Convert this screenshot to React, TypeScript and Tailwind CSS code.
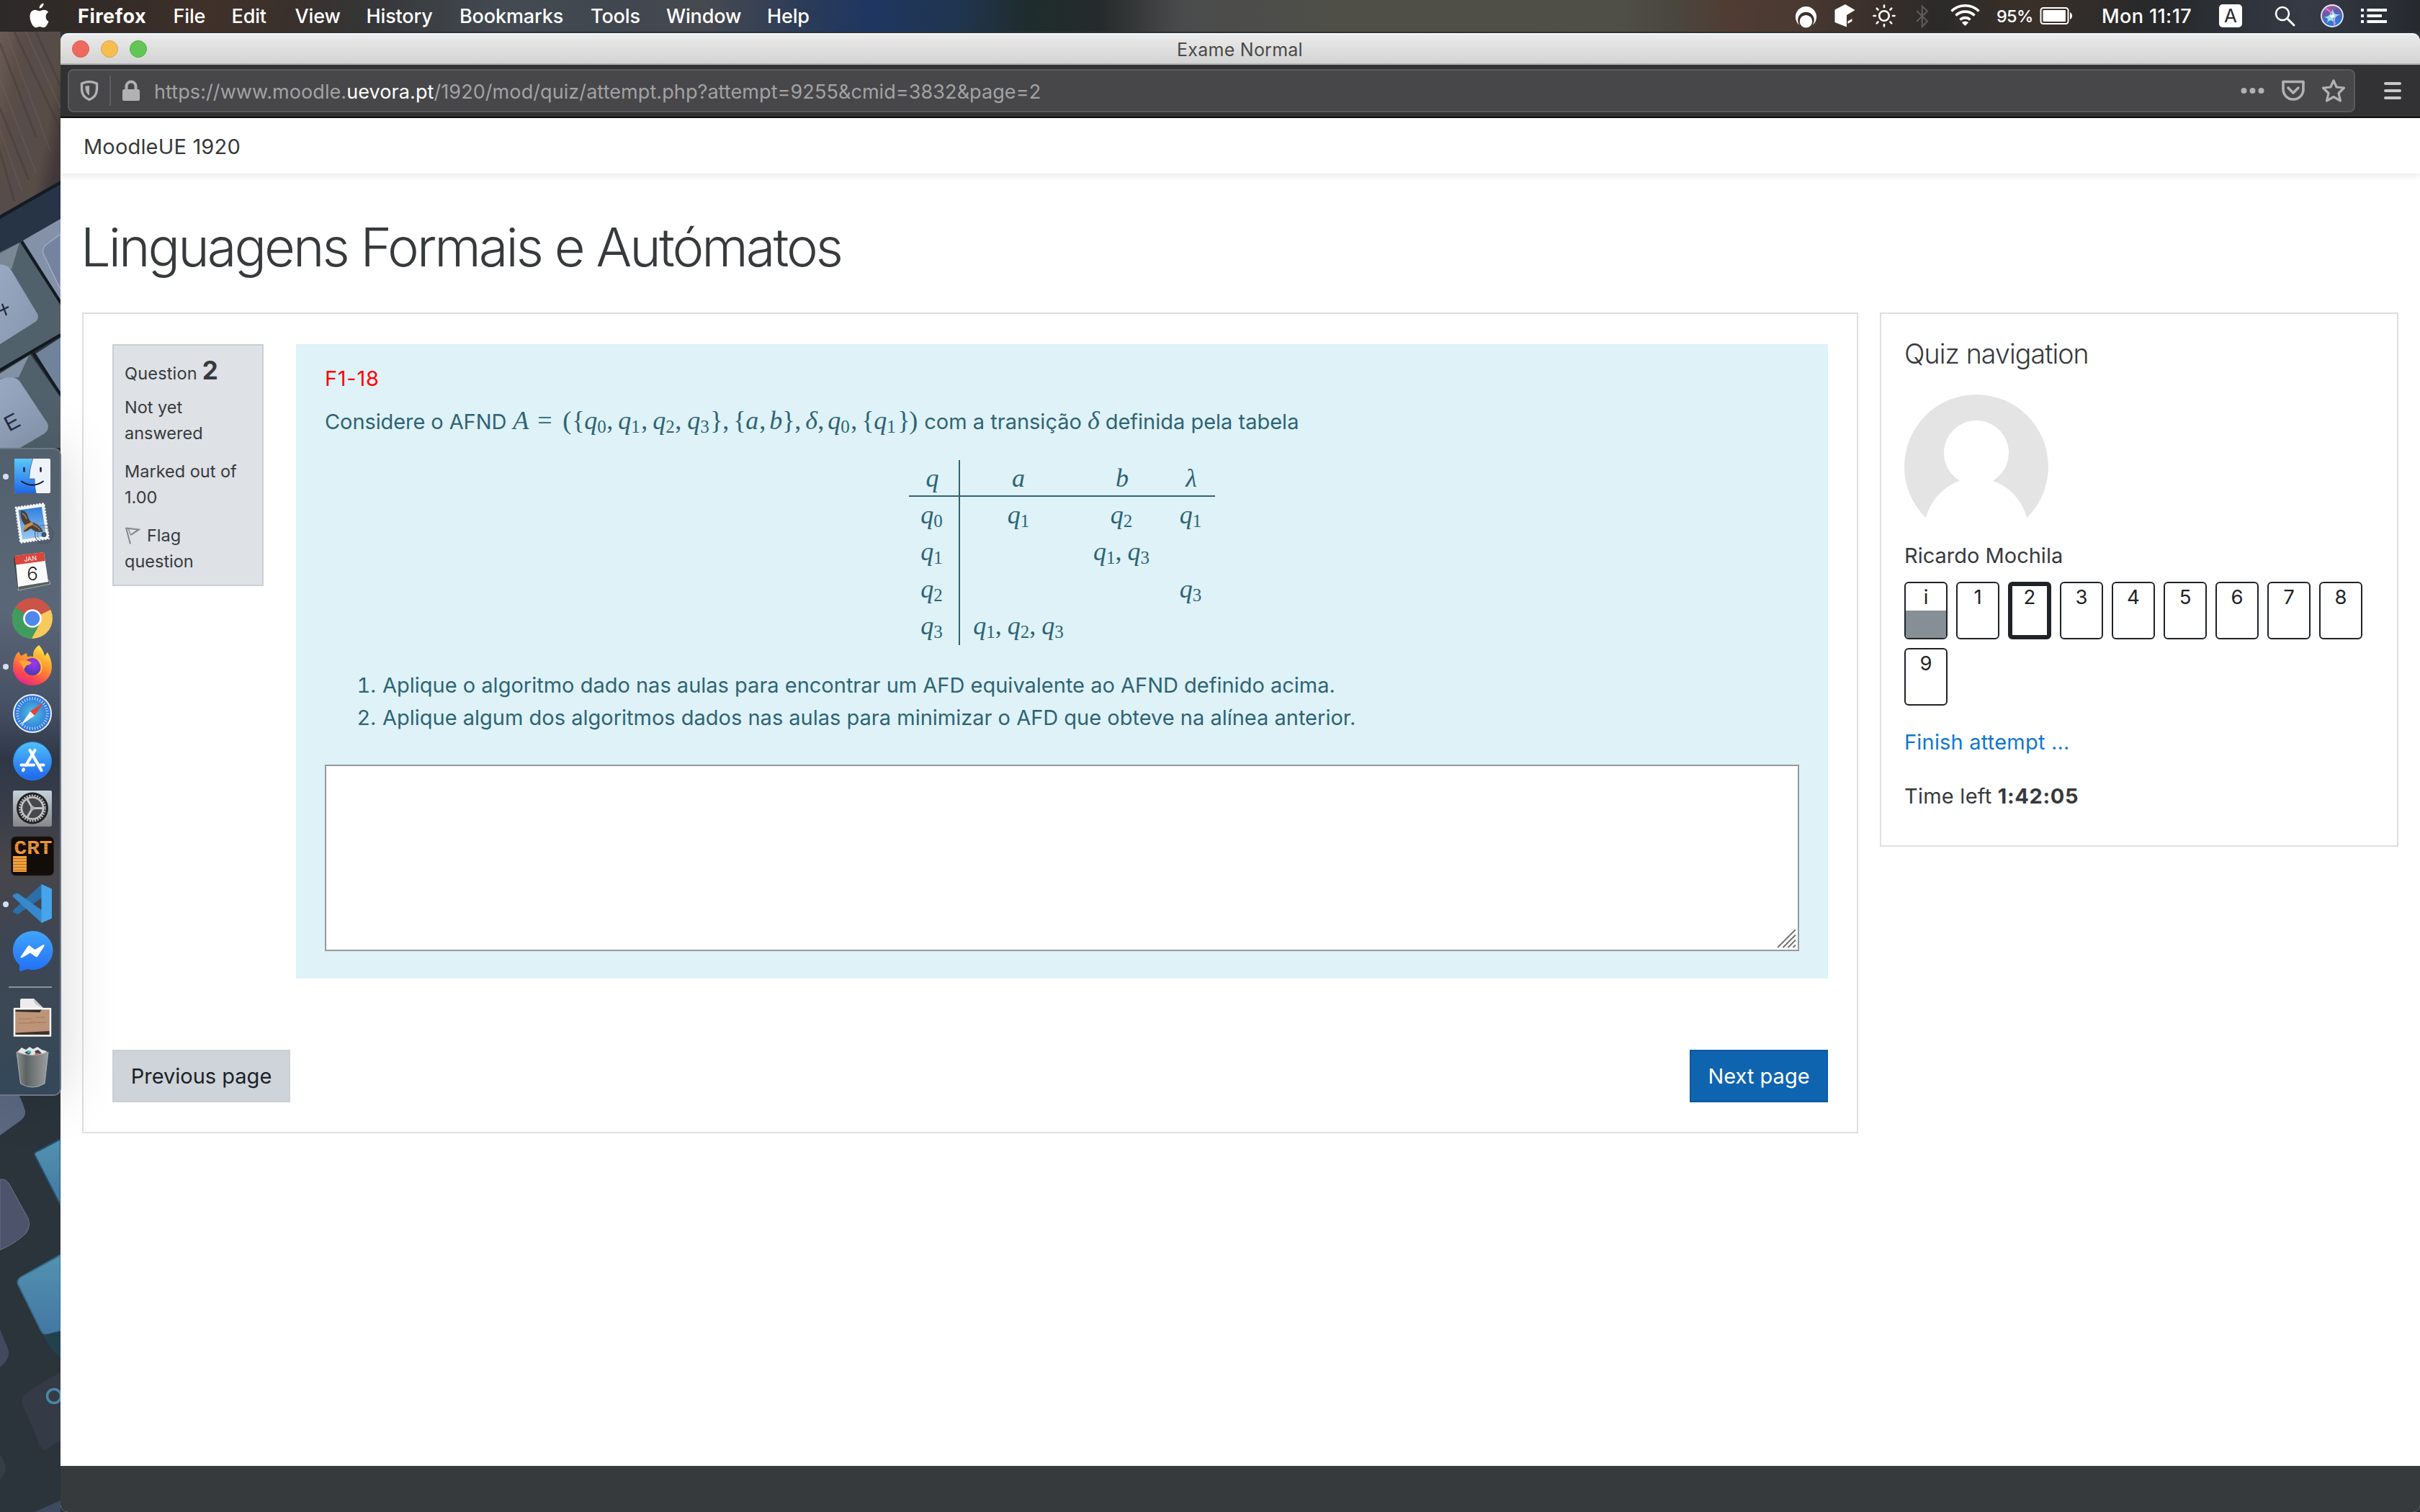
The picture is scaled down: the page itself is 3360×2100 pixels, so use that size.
import type { ReactNode } from "react";

type SliceProps = { x: number; w: number; y?: number; h?: number; children?: ReactNode };

/* A slice of the desktop: the drawing inside uses screen coordinates. */
function Slice({ x, w, y = 0, h = 44, children }: SliceProps) {
  return (
    <svg className="block shrink-0" width={w} height={h} viewBox={`${x} ${y} ${w} ${h}`}>
      {children}
    </svg>
  );
}

function Apple() {
  return (
    <svg className="block h-[36px] w-[27px]" viewBox="0 0 27 36" fill="#fff">
      <path d="M19.5 0.5c.3 3.2-2.4 7-5.9 7.1C13.200 4.400 16.300 1 19.500.5z" />
      <path d="M22.600 19c0-3 1.700-4.900 3.500-6-1.400-2-3.600-3.200-6.100-3.200-2.700 0-4.300 1.500-6.200 1.500-2 0-3.700-1.500-6.200-1.500C3.500 9.800.5 13.400.5 19c0 7.400 4.700 15.300 8.400 15.300 2 0 2.900-1.300 5.200-1.300s3 1.300 5.200 1.300c3.400 0 6.300-5.600 7.200-8.600-2.400-1-3.900-3.500-3.900-6.700z" />
    </svg>
  );
}

function MenuBar() {
  const items = [
    ["File", "w-[81px]"],
    ["Edit", "w-[88px]"],
    ["View", "w-[99px]"],
    ["History", "w-[129.5px]"],
    ["Bookmarks", "w-[182px]"],
    ["Tools", "w-[105px]"],
    ["Window", "w-[140px]"],
    ["Help", "w-[80px]"],
  ];
  return (
    <header className="flex h-[44px] items-center justify-between bg-[linear-gradient(90deg,#2d2928_0px,#332b27_150px,#40312a_290px,#3a302b_400px,#353536_500px,#434a52_700px,#41474f_850px,#464950_980px,#2c3c58_1110px,#1e3661_1210px,#20354f_1330px,#1f2c2d_1430px,#262b2c_1530px,#4a4b4c_1640px,#4f4f48_1850px,#4f4e47_2250px,#49473f_2320px,#503c33_2400px,#4a3a32_2490px,#3a2f2a_2600px,#2b2a28_2690px,#3a302a_2820px,#26282a_3000px,#353a45_3200px,#262a2f_3360px)] text-[27px] leading-[45px] font-medium text-white">
      <nav className="flex items-center whitespace-nowrap">
        <div className="w-[108px] pl-[41px]">
          <Apple />
        </div>
        <span className="w-[132.5px] font-bold tracking-[0.02em]">Firefox</span>
        {items.map(([label, width]) => (
          <span key={label} className={`${width} tracking-[-0.005em]`}>
            {label}
          </span>
        ))}
      </nav>
      <div className="flex w-[870px] shrink-0 items-center whitespace-nowrap">
        <Slice x={2490} w={56}>
          <circle cx="2507.500" cy="23.500" r="14.600" fill="#fff" />
          <circle cx="2507.500" cy="28" r="11.300" fill="#3c302b" />
          <circle cx="2507.500" cy="29.800" r="8.800" fill="#fff" />
        </Slice>
        <Slice x={2546} w={52}>
          <path d="M2562 6L2575.500 14 2564 21V37.600L2547.500 31V13.500z" fill="#fff" />
          <path d="M2565.500 29.500L2571.500 26V29.500L2565.500 33z" fill="#fff" />
        </Slice>
        <Slice x={2598} w={60}>
          <g stroke="#fff" strokeWidth="2.600" fill="none" strokeLinecap="round">
            <circle cx="2616" cy="22" r="6.800" />
            <path d="M2616 7.500V10M2616 34V36.500M2601.500 22H2604M2628 22H2630.500M2605.700 11.700L2607.500 13.500M2624.500 30.500L2626.300 32.300M2605.700 32.300L2607.500 30.500M2624.500 13.500L2626.300 11.700" />
          </g>
        </Slice>
        <Slice x={2658} w={48}>
          <path d="M2661 15L2676 29.500 2668.800 37V8.500L2676 15.500 2661 30" fill="none" stroke="#5c5a58" strokeWidth="2.200" />
        </Slice>
        <Slice x={2706} w={65}>
          <g stroke="#fff" strokeWidth="3.600" fill="none">
            <path d="M2709.500 15.500a27 27 0 0 1 38 0" />
            <path d="M2715.500 21.500a18.500 18.500 0 0 1 26 0" />
            <path d="M2721.500 27.500a10 10 0 0 1 14 0" />
          </g>
          <path d="M2728.500 36L2723.800 31.300a6.800 6.800 0 0 1 9.400 0z" fill="#fff" />
        </Slice>
        <span className="w-[60px] pl-[1px] text-[23.5px] tracking-[-0.03em]">95%</span>
        <Slice x={2831} w={87}>
          <rect x="2833.500" y="11" width="38" height="22" rx="3.500" fill="none" stroke="#fff" strokeWidth="2" />
          <rect x="2836.500" y="14" width="31.500" height="16" rx="1" fill="#fff" />
          <path d="M2874.500 17.500a6 6 0 0 1 0 9z" fill="#fff" stroke="#fff" />
        </Slice>
        <span className="w-[163px] tracking-[0.014em]">Mon 11:17</span>
        <div className="flex h-[32px] w-[32px] items-center justify-center rounded-[5px] bg-white text-[26px] leading-[32px] font-normal text-[#26282c]">A</div>
        <Slice x={3113} w={107}>
          <circle cx="3169" cy="19" r="9" fill="none" stroke="#fff" strokeWidth="2.600" />
          <path d="M3175.500 25.500L3185 35" stroke="#fff" strokeWidth="3" strokeLinecap="round" />
        </Slice>
        <Slice x={3220} w={56}>
          <defs>
            <linearGradient id="siri" x1="0" y1="0" x2="0.300" y2="1">
              <stop offset="0" stopColor="#d65aa8" />
              <stop offset="0.400" stopColor="#6a5aa8" />
              <stop offset="1" stopColor="#2a7be0" />
            </linearGradient>
          </defs>
          <circle cx="3238" cy="22" r="15" fill="url(#siri)" stroke="#e8e8f0" strokeWidth="1.800" />
          <path d="M3226 24C3233 23 3236 21 3239 12C3239.500 19 3242 20.500 3250 20C3242.500 22 3240.500 25 3243 34C3238 27 3235 27 3230 32C3234 26.500 3232 24.500 3226 24z" fill="#8ee4f0" />
          <path d="M3238 19l3 2 0 3-4 1-2-3z" fill="#fff" />
          <path d="M3229 12q6 2 9 9M3240 24q1 6 1 11" fill="none" stroke="#f37bc3" strokeWidth="2" />
        </Slice>
        <Slice x={3276} w={84}>
          <path d="M3278 12h4v4h-4zM3286.500 12h27.500v4h-27.500zM3278 20h4v4h-4zM3286.500 20h20.500v4h-20.500zM3278 28h4v4h-4zM3286.500 28h27.500v4h-27.500z" fill="#fff" />
        </Slice>
      </div>
    </header>
  );
}

/* Desktop picture: a typewriter keyboard on a wooden table. */
function Wallpaper() {
  return (
    <svg className="absolute inset-0 h-full w-full" viewBox="0 44 84 2056" preserveAspectRatio="none">
      <defs>
        <linearGradient id="wood" x1="0" y1="0" x2="1" y2="0.600">
          <stop offset="0" stopColor="#6a5b55" />
          <stop offset="0.300" stopColor="#5a4d47" />
          <stop offset="0.500" stopColor="#564c4b" />
          <stop offset="0.800" stopColor="#584c46" />
          <stop offset="1" stopColor="#41383a" />
        </linearGradient>
        <linearGradient id="keyFace" x1="0" y1="0" x2="1" y2="1">
          <stop offset="0" stopColor="#99a8c2" />
          <stop offset="1" stopColor="#8696ad" />
        </linearGradient>
        <linearGradient id="blueKey" x1="0" y1="0" x2="0" y2="1">
          <stop offset="0" stopColor="#5292b0" />
          <stop offset="1" stopColor="#4377a4" />
        </linearGradient>
      </defs>
      <rect x="0" y="44" width="84" height="2056" fill="#2b333b" />
      <path d="M0 44H84V251L0 299z" fill="url(#wood)" />
      <g stroke="#40342f" strokeWidth="3" opacity="0.350" fill="none">
        <path d="M0 60L50 190M20 44L84 180M50 44L84 120M0 150L40 250M0 210L20 280" />
      </g>
      <g stroke="#7a6a66" strokeWidth="2" opacity="0.300" fill="none">
        <path d="M8 44L70 210M36 44L84 150M0 110L50 240M0 180L30 265" />
      </g>
      <path d="M0 299L84 251V304L31 335L0 350z" fill="#263445" />
      <path d="M0 299L84 251V256L0 304z" fill="#151b22" />
      <path d="M0 350L29 336L84 424V464L0 514z" fill="#51616c" />
      <path d="M0 352L27 337L16 374L0 367z" fill="#7a8896" />
      <path d="M0 367Q12 368 16 376L52 436Q55 443 49 447L0 478z" fill="url(#keyFace)" />
      <path d="M0 432L12 426M3 422L9 438" stroke="#20283c" strokeWidth="2.200" />
      <path d="M32 334L84 304V417z" fill="#8392a8" />
      <path d="M64 340L84 325V402L60 352Q58 345 64 340z" fill="#7484a0" stroke="#9eabc0" strokeWidth="1.500" />
      <path d="M30 336L84 420" stroke="#131a22" strokeWidth="4" />
      <path d="M0 514L84 465" stroke="#12181f" strokeWidth="4" />
      <path d="M0 518L42 492L84 552V622H0z" fill="#50616b" />
      <path d="M0 519L40 494L26 524L0 526z" fill="#8292a4" />
      <path d="M0 527Q22 519 29 532L66 588Q69 596 62 602L28 622H0z" fill="url(#keyFace)" />
      <text x="7" y="598" fontSize="30" fill="#232b44" fontFamily="Liberation Sans" transform="rotate(-28 14 588)">
        E
      </text>
      <path d="M50 491L84 469V546z" fill="#71839a" />
      <path d="M46 490L84 548" stroke="#141b22" strokeWidth="4" />
      <path d="M0 1510H20Q30 1525 35 1543Q36 1550 29 1556L0 1577z" fill="#5b6880" />
      <path d="M0 1638Q9 1637 13 1645L39 1692Q43 1703 36 1713Q20 1728 0 1736z" fill="#4c536b" stroke="#6d7486" strokeWidth="1" />
      <path d="M48 1604Q47 1600 54 1598L84 1582V1674z" fill="url(#blueKey)" stroke="#24506a" strokeWidth="2" />
      <path d="M25 1784Q23 1777 30 1773L84 1743V1848L66 1854Q60 1854 57 1848z" fill="url(#blueKey)" stroke="#356c8c" strokeWidth="2" />
      <path d="M60 1854L84 1849V1886Q70 1876 60 1854z" fill="#23404d" />
      <path d="M0 1846L12 1876Q14 1888 0 1899z" fill="#414a5f" />
      <path d="M31 1950Q29 1940 36 1936Q60 1918 84 1906V2001L62 2014Q57 2013 54 2004z" fill="#343b46" />
      <circle cx="75" cy="1939" r="9.500" fill="none" stroke="#4b87a6" strokeWidth="3.500" />
      <path d="M0 2020Q8 2030 8 2042Q4 2052 0 2054z" fill="#353d49" />
      <path d="M48 2100L84 2084V2100z" fill="#3d4a60" />
    </svg>
  );
}

function Running({ y }: { y: number }) {
  return <circle cx="8" cy={y} r="4" fill="#d4def0" />;
}

function Dock() {
  const ticks = Array.from({ length: 36 }, (_, i) => i * 10);
  return (
    <aside className="relative z-10 mt-[578px] flex h-[900px] w-[85px] flex-col rounded-r-[10px] border-y-2 border-r-2 border-[#6c7682] bg-[linear-gradient(180deg,#52606d_0%,#5a6778_25%,#465064_40%,#2f3747_48%,#3c3f49_58%,#48464a_64%,#3d4553_76%,#3b4855_88%,#33485a_100%)] pt-[4px] shadow-[0_0_80px_rgba(0,0,0,0.16)]">
      <Slice x={0} w={82} y={628} h={66}>
        <defs>
          <linearGradient id="finder" x1="0" y1="0" x2="0" y2="1">
            <stop offset="0" stopColor="#5bc8fa" />
            <stop offset="1" stopColor="#2068e8" />
          </linearGradient>
        </defs>
        <Running y={662} />
        <rect x="20" y="637" width="50" height="48" rx="2" fill="#eef3f9" />
        <path d="M22 637H45.500Q41 650 40.500 665H48Q47.500 675 50 685H22Q20 685 20 683V639Q20 637 22 637z" fill="url(#finder)" />
        <path d="M45.500 637Q41 650 40.500 665H48Q47.500 675 50 685" fill="none" stroke="#29568f" strokeWidth="0.800" />
        <path d="M33.500 650v4.500M56.500 650v4.500" stroke="#16233c" strokeWidth="2.600" strokeLinecap="round" />
        <path d="M30 668.500Q45 679 60 668.500" fill="none" stroke="#101a2c" strokeWidth="2" strokeLinecap="round" />
      </Slice>
      <Slice x={0} w={82} y={694} h={66}>
        <defs>
          <linearGradient id="sky" x1="0" y1="0" x2="0" y2="1">
            <stop offset="0" stopColor="#2f7edb" />
            <stop offset="1" stopColor="#9cc9f2" />
          </linearGradient>
        </defs>
        <path d="M22 705L61 699.500L67.500 748L28.500 753.500z" fill="#f5f5f5" />
        <path d="M22 705L61 699.500L67.500 748L28.500 753.500z" fill="none" stroke="#f5f5f5" strokeWidth="3" strokeLinecap="round" strokeDasharray="0.100 4.100" />
        <path d="M25.500 708.500L58 704L64 744.500L31 749.500z" fill="url(#sky)" />
        <path d="M29 709Q35 708 38 715Q40 722 43 725Q53 726 60 738Q51 741 43 734Q38 738 33 739Q32 735 36 731Q27 722 29 709z" fill="#4f3e31" />
        <path d="M31 713Q35 715 37 721M46 729Q52 731 56 737" fill="none" stroke="#9a8468" strokeWidth="1.500" />
        <path d="M35 729l9-4 3 3-9 5-5 5z" fill="#c98d4b" />
        <circle cx="61" cy="742" r="12.500" fill="none" stroke="#3c4a5a" strokeOpacity="0.700" strokeWidth="1.200" />
        <circle cx="61" cy="742" r="9" fill="none" stroke="#3c4a5a" strokeOpacity="0.600" strokeWidth="0.800" />
        <circle cx="61" cy="742.500" r="3.500" fill="#3c5577" />
      </Slice>
      <Slice x={0} w={82} y={760} h={66}>
        <path d="M19 777L21 772L26 816L25 820z" fill="#3b4440" />
        <path d="M25 820L70 811L68 806L26 814z" fill="#56605c" stroke="#b9bfba" strokeWidth="0.800" />
        <path d="M21 772L61 767L67 808L25 815z" fill="#fbfbfb" />
        <path d="M20.500 772L61 767L62.500 779L22 784.500z" fill="#d9443c" />
        <text x="42" y="779" fontSize="9" textAnchor="middle" fill="#fff" fontFamily="Inter" transform="rotate(-6 42 776)">
          JAN
        </text>
        <text x="45" y="805.500" fontSize="26" textAnchor="middle" fill="#1c1c1c" fontFamily="Inter" fontWeight="300">
          6
        </text>
      </Slice>
      <Slice x={0} w={82} y={826} h={66}>
        <circle cx="45" cy="859" r="28" fill="#f8ca5b" />
        <path d="M45 859L21 844.500A28 28 0 0 1 70.500 846.500z" fill="#cc5347" />
        <path d="M45 859L21.500 843.500A28 28 0 0 0 44 887L56 865z" fill="#429b5e" />
        <path d="M45 859L70.500 846.500H45z" fill="#cc5347" />
        <circle cx="45" cy="859" r="12.800" fill="#fff" />
        <circle cx="45" cy="859" r="10.300" fill="#4f87ed" />
      </Slice>
      <Slice x={0} w={82} y={892} h={66}>
        <defs>
          <linearGradient id="fox" x1="0.800" y1="0" x2="0.300" y2="1">
            <stop offset="0" stopColor="#fff04a" />
            <stop offset="0.400" stopColor="#ff9c2e" />
            <stop offset="0.750" stopColor="#ff4f4a" />
            <stop offset="1" stopColor="#e3248c" />
          </linearGradient>
          <radialGradient id="globe" cx="0.600" cy="0.300" r="0.700">
            <stop offset="0" stopColor="#a236f0" />
            <stop offset="1" stopColor="#4a3ab8" />
          </radialGradient>
        </defs>
        <Running y={926} />
        <path d="M54 896Q60 902 62 911L66 906Q72 916 72 927A27 25 0 0 1 18 927Q18 912 26 905L29 911L37 907L38 912Q43 911 46 912Q45 902 54 896z" fill="url(#fox)" />
        <circle cx="45" cy="926" r="12" fill="url(#globe)" />
        <path d="M26 918Q36 915 44 920Q42 924 37 924Q34 928 33 930Q31 923 26 918z" fill="#ffa436" />
        <path d="M46 912Q58 914 59 927Q58 936 51 938Q60 930 55 921Q52 915 46 912z" fill="#ffc13a" />
      </Slice>
      <Slice x={0} w={82} y={958} h={66}>
        <defs>
          <radialGradient id="safari">
            <stop offset="0" stopColor="#4fc6d8" />
            <stop offset="1" stopColor="#2b6de0" />
          </radialGradient>
        </defs>
        <circle cx="45" cy="991" r="26" fill="url(#safari)" stroke="#f0f3f7" strokeWidth="2" />
        {ticks.map((a) => (
          <path key={a} d="M45 968v4" stroke="#d9ebfb" strokeWidth="1" transform={`rotate(${a} 45 991)`} />
        ))}
        <path d="M61.500 975L48 994L42 988z" fill="#e6413a" />
        <path d="M28.500 1007.500L42 988L48 994z" fill="#f2f2f2" />
      </Slice>
      <Slice x={0} w={82} y={1024} h={66}>
        <defs>
          <linearGradient id="store" x1="0" y1="0" x2="0" y2="1">
            <stop offset="0" stopColor="#4fc0fa" />
            <stop offset="1" stopColor="#1d66ee" />
          </linearGradient>
        </defs>
        <circle cx="45" cy="1057" r="26.500" fill="url(#store)" stroke="#2a86e0" strokeWidth="1" />
        <g stroke="#fff" strokeWidth="4.200" strokeLinecap="round" fill="none">
          <path d="M48.500 1042L36 1063M32.800 1068.500L32 1070M41.500 1042L57.500 1070M29.500 1062.500H47M55 1062.500H60.500" />
        </g>
      </Slice>
      <Slice x={0} w={82} y={1090} h={66}>
        <defs>
          <linearGradient id="metal" x1="0" y1="0" x2="0" y2="1">
            <stop offset="0" stopColor="#c5d3da" />
            <stop offset="1" stopColor="#84878a" />
          </linearGradient>
        </defs>
        <rect x="18" y="1098" width="54" height="50" rx="2" fill="url(#metal)" />
        <circle cx="45" cy="1122.500" r="22" fill="#202224" />
        <circle cx="45" cy="1122.500" r="17.500" fill="none" stroke="#b4b6b8" strokeWidth="3" strokeDasharray="2.200 1.465" />
        <circle cx="45" cy="1122.500" r="15" fill="#46484a" stroke="#c0c2c4" strokeWidth="2.600" />
        <path d="M45 1122.500L37.500 1109.500M45 1122.500H60M45 1122.500L37.500 1135.500" stroke="#c0c2c4" strokeWidth="2.800" />
        <circle cx="45" cy="1122.500" r="3" fill="#aeb0b2" />
      </Slice>
      <Slice x={0} w={82} y={1156} h={66}>
        <rect x="15.500" y="1162" width="59" height="54" rx="6" fill="#120d08" stroke="#2c2420" strokeWidth="1" />
        <text x="19.500" y="1186" fontSize="28" textLength="53" lengthAdjust="spacingAndGlyphs" fill="#f2973a" fontFamily="Liberation Mono" fontWeight="700">
          CRT
        </text>
        <rect x="18" y="1189" width="19" height="22" fill="#f4a03c" />
        <path d="M18 1192.500H73M18 1196.500H73M18 1200.500H73M18 1204.500H73M18 1208.500H73M18 1172H73M18 1176H73M18 1180H73" stroke="#1a1009" strokeOpacity="0.350" strokeWidth="1" />
      </Slice>
      <Slice x={0} w={82} y={1222} h={66}>
        <Running y={1256} />
        <path d="M18.500 1267.500Q17 1266 18.500 1264L58 1228V1247L26 1269Q24 1270 22.500 1269z" fill="#2c6fa8" />
        <path d="M18.500 1242.500L22.500 1241Q24 1240.500 26 1241.500L58 1264V1282L18.500 1246Q17 1244 18.500 1242.500z" fill="#3589cc" />
        <path d="M57.500 1228L72 1234.500V1275.500L57.500 1282z" fill="#47a3ea" />
      </Slice>
      <Slice x={0} w={82} y={1288} h={66}>
        <defs>
          <linearGradient id="msg" x1="0" y1="0" x2="0" y2="1">
            <stop offset="0" stopColor="#41a5fb" />
            <stop offset="1" stopColor="#2170f6" />
          </linearGradient>
        </defs>
        <path d="M45 1293A28 27 0 1 1 38 1346L29 1349Q27 1349 27 1347V1340A28 27 0 0 1 45 1293z" fill="url(#msg)" />
        <path d="M28.500 1329L38.500 1314.500Q40 1312.500 42 1314L48.500 1319L60 1312Q62.500 1311.500 61.500 1314L52.500 1328Q51 1330 49 1328.500L42 1323.500L31 1330Q28 1331 28.500 1329z" fill="#fff" />
      </Slice>
      <Slice x={0} w={82} y={1354} h={26}>
        <path d="M12 1371H72" stroke="#8b939c" strokeWidth="2" />
      </Slice>
      <Slice x={0} w={82} y={1380} h={66}>
        <path d="M28 1400V1389Q28 1387 30 1387H47L60 1400z" fill="#ececec" />
        <path d="M47 1387Q46 1393 51 1396L60 1400z" fill="#c7c7c7" />
        <rect x="20" y="1401" width="50" height="37.500" fill="#bd9478" stroke="#fafafa" strokeWidth="2.400" />
        <path d="M21.500 1402.500H58L55 1406L21.500 1405z" fill="#2c2c2e" />
        <path d="M21.500 1434.500L68.500 1432V1437H21.500z" fill="#3a3430" />
        <path d="M26 1415h18M26 1421h22M50 1413h12M48 1420h16" stroke="#a07a60" strokeWidth="1" />
        <path d="M40 1422q4-6 8-2" fill="none" stroke="#d8704c" strokeWidth="1.200" />
      </Slice>
      <Slice x={0} w={82} y={1446} h={66}>
        <defs>
          <linearGradient id="bin" x1="0" y1="0" x2="1" y2="0">
            <stop offset="0" stopColor="#8a8f90" />
            <stop offset="0.300" stopColor="#5d6263" />
            <stop offset="0.650" stopColor="#7d8182" />
            <stop offset="1" stopColor="#9a9e9f" />
          </linearGradient>
        </defs>
        <path d="M24 1461L30 1455L36 1458L41 1454L46 1457L52 1454L58 1458L65 1460L60 1467H30z" fill="#e6e6e6" />
        <path d="M34 1462l5-3 4 3-3 3zM48 1460l5-2 5 5-7 2z" fill="#3a3f4c" />
        <path d="M37 1460l5-1 2 3-5 1z" fill="#2fc3c8" />
        <path d="M48 1463l6-1 1 3-6 1z" fill="#d2643c" />
        <path d="M23 1461Q45 1470 67 1461L62 1505Q45 1515 28.500 1505z" fill="url(#bin)" stroke="#a9aeb0" strokeWidth="1" />
      </Slice>
    </aside>
  );
}

function TitleBar() {
  return (
    <div className="flex h-[44px] items-center rounded-t-[10px] border-t-2 border-b-2 border-t-[#f6f6f6] border-b-[#b0b3b0] bg-linear-to-b from-[#ebebeb] to-[#d3d3d3] pl-[16px]">
      <div className="flex gap-[16px]">
        <i className="size-[24px] rounded-full border border-[#dd5a50] bg-[#ee6a5f]" />
        <i className="size-[24px] rounded-full border border-[#dfa544] bg-[#f6be50]" />
        <i className="size-[24px] rounded-full border border-[#52ae45] bg-[#62c655]" />
      </div>
      <div className="flex-1 pt-[1px] pr-[121px] text-center text-[25px] leading-[40px] tracking-[0.01em] text-[#4a4a4a]">Exame Normal</div>
    </div>
  );
}

function UrlBar() {
  return (
    <div className="flex h-[74px] items-center border-b-2 border-[#0c0c0d] bg-[#323234] pl-[10px]">
      <div className="flex h-[60px] w-[3176px] items-center rounded-[8px] border-2 border-[#5a5a5c] bg-[#474749]">
        <Slice x={96} w={118} y={98} h={56}>
          <path d="M113.500 116Q124 111 134.500 116V124Q134.500 134 124 138.500Q113.500 134 113.500 124z" fill="none" stroke="#b1b1b3" strokeWidth="3.400" strokeLinejoin="round" />
          <path d="M124 119V132.500Q118.500 129 118.500 122V119.500z" fill="#b1b1b3" />
          <path d="M153 105V147" stroke="#66666a" strokeWidth="1.600" />
          <rect x="170" y="124" width="24" height="16" rx="2.500" fill="#b1b1b3" />
          <path d="M175.500 125V120a6.500 6.500 0 0 1 13 0V125" fill="none" stroke="#b1b1b3" strokeWidth="4" />
        </Slice>
        <div className="flex-1 pt-[3px] text-[27px] leading-[40px] tracking-[0.003em] whitespace-nowrap text-[#a2a2a4]">
          https://www.moodle.<span className="text-white">uevora.pt</span>/1920/mod/quiz/attempt.php?attempt=9255&amp;cmid=3832&amp;page=2
        </div>
        <Slice x={3098} w={170} y={98} h={56}>
          <g fill="#b1b1b3">
            <circle cx="3115.500" cy="126" r="4" />
            <circle cx="3127.500" cy="126" r="4" />
            <circle cx="3139.500" cy="126" r="4" />
          </g>
          <path d="M3170 113.500H3198V124A14 14 0 0 1 3170 124z" fill="none" stroke="#b1b1b3" strokeWidth="3.600" strokeLinejoin="round" />
          <path d="M3177 122L3184 129L3191 122" fill="none" stroke="#b1b1b3" strokeWidth="3.600" strokeLinecap="round" strokeLinejoin="round" />
          <path d="M3240 112L3244.200 121L3254.500 122L3247 129.500L3249.500 140L3240 134.500L3230.500 140L3233 129.500L3225.500 122L3235.800 121z" fill="none" stroke="#b1b1b3" strokeWidth="3.200" strokeLinejoin="round" />
        </Slice>
      </div>
      <Slice x={3270} w={90} y={98} h={56}>
        <path d="M3312 116H3332M3312 126H3332M3312 136H3332" stroke="#c8c8ca" strokeWidth="4" strokeLinecap="round" />
      </Slice>
    </div>
  );
}

/* A math letter in italics with an optional numeric subscript. */
function Q({ n }: { n?: number }) {
  return (
    <>
      <i>q</i>
      {n !== undefined && <span className="relative top-[5px] text-[25px]">{n}</span>}
    </>
  );
}

function QList({ of }: { of: number[] }) {
  return (
    <>
      {of.map((n, i) => (
        <span key={n} className="inline-flex items-baseline">
          <Q n={n} />
          {i < of.length - 1 && <span className="w-[17px] text-left">,</span>}
        </span>
      ))}
    </>
  );
}

function Automaton() {
  const tokens: [ReactNode, string][] = [
    [<i>A</i>, "w-[34px]"],
    ["=", "w-[35px]"],
    ["(", "w-[13px]"],
    ["{", "w-[17px]"],
    [<Q n={0} />, "w-[31px]"],
    [",", "w-[16px]"],
    [<Q n={1} />, "w-[32px]"],
    [",", "w-[16px]"],
    [<Q n={2} />, "w-[31px]"],
    [",", "w-[17px]"],
    [<Q n={3} />, "w-[32px]"],
    ["}", "w-[17px]"],
    [",", "w-[15px]"],
    ["{", "w-[17px]"],
    [<i>a</i>, "w-[19px]"],
    [",", "w-[14px]"],
    [<i>b</i>, "w-[18px]"],
    ["}", "w-[17px]"],
    [",", "w-[15px]"],
    [<i>δ</i>, "w-[17px]"],
    [",", "w-[14px]"],
    [<Q n={0} />, "w-[32px]"],
    [",", "w-[15px]"],
    ["{", "w-[17px]"],
    [<Q n={1} />, "w-[33px]"],
    ["}", "w-[16px]"],
    [")", "w-[21px]"],
  ];
  return (
    <span className="ml-[9px] flex items-baseline font-['Liberation_Serif',serif] text-[36px] leading-[45px]">
      {tokens.map(([token, width], i) => (
        <span key={i} className={`${width} whitespace-nowrap`}>
          {token}
        </span>
      ))}
    </span>
  );
}

function TransitionTable() {
  const rows = [
    { state: 0, a: [1], b: [2], l: [1] },
    { state: 1, a: [], b: [1, 3], l: [] },
    { state: 2, a: [], b: [], l: [3] },
    { state: 3, a: [1, 2, 3], b: [], l: [] },
  ];
  return (
    <div className="mt-[31px] ml-[811px] w-[425px] font-['Liberation_Serif',serif] text-[36px]">
      <div className="grid h-[51px] grid-cols-[71px_162px_124px_68px] border-b-2 border-[#2f6473] text-center leading-[51px] italic">
        <span className="h-[49px] border-r-2 border-[#2f6473] pr-[4px]">q</span>
        <span>a</span>
        <span className="pl-[2px]">b</span>
        <span className="pl-[2px]">λ</span>
      </div>
      {rows.map((row) => (
        <div key={row.state} className="grid h-[51.4px] grid-cols-[71px_162px_124px_68px] text-center leading-[51px]">
          <span className="h-[51.4px] border-r-2 border-[#2f6473] pr-[6px]">
            <Q n={row.state} />
          </span>
          <span className="whitespace-nowrap">
            <QList of={row.a} />
          </span>
          <span>
            <QList of={row.b} />
          </span>
          <span>
            <QList of={row.l} />
          </span>
        </div>
      ))}
    </div>
  );
}

function QuestionInfo() {
  return (
    <div className="h-[336px] w-[210px] border-2 border-[#c9ced9] bg-[#dee1e6] pt-[14px] pl-[15px] text-[23.5px] leading-[36px]">
      <div className="h-[36px] leading-[40px] tracking-[0.008em]">
        Question <b className="text-[35px]">2</b>
      </div>
      <div className="mt-[18px]">
        Not yet
        <br />
        answered
      </div>
      <div className="mt-[17px]">
        Marked out of
        <br />
        1.00
      </div>
      <div className="mt-[17px]">
        <svg className="mr-[9px] inline-block h-[24px] w-[22px] align-[-4px]" viewBox="0 0 22 24" fill="none" stroke="#85888c" strokeWidth="2">
          <path d="M2 1L8 23.500M2 1.500L20 3.500L9.500 10.500" />
          <path d="M5 2L8.500 11L18.500 3.500" strokeWidth="1.300" />
        </svg>
        Flag
        <br />
        question
      </div>
    </div>
  );
}

function Formulation() {
  return (
    <div className="h-[881px] w-[2127px] bg-[#def2f8] pt-[25px] pl-[40px] text-[#2f6473]">
      <p className="leading-[45px] tracking-[0.025em] text-[#ff0000]">F1-18</p>
      <div className="mt-[14px] flex h-[45px] items-baseline leading-[45px] whitespace-nowrap">
        <span className="tracking-[-0.003em]">Considere o AFND</span>
        <Automaton />
        <span>com a transição</span>
        <i className="mx-[8px] font-['Liberation_Serif',serif] text-[36px]">δ</i>
        <span>definida pela tabela</span>
      </div>
      <div className="pt-[1px]">
        <TransitionTable />
      </div>
      <ol className="mt-[33px] leading-[45px] whitespace-nowrap">
        {[
          "Aplique o algoritmo dado nas aulas para encontrar um AFD equivalente ao AFND definido acima.",
          "Aplique algum dos algoritmos dados nas aulas para minimizar o AFD que obteve na alínea anterior.",
        ].map((text, i) => (
          <li key={i} className="flex gap-[9px]">
            <span className="w-[71px] text-right tabular-nums">{i + 1}.</span>
            <span>{text}</span>
          </li>
        ))}
      </ol>
      <div className="mt-[43px] flex h-[259px] w-[2047px] items-end justify-end border-2 border-[#96989b] bg-white p-[2px]">
        <svg className="size-[26px]" viewBox="0 0 26 26" stroke="#6e6e6e" strokeWidth="1.800">
          <path d="M0 25L25 0M7.500 25L25 7.500M14.500 25L25 14.500M21.500 25L25 21.500" />
        </svg>
      </div>
    </div>
  );
}

function QuizNavigation() {
  return (
    <section className="h-[742px] w-[720px] border-2 border-[#dfdfdf] pt-[34px] pl-[32px]">
      <h2 className="text-[37.5px] leading-[44px] font-[350] tracking-[-0.024em]">Quiz navigation</h2>
      <svg className="mt-[34px] block size-[200px]" viewBox="0 0 200 200">
        <defs>
          <clipPath id="avatar">
            <circle cx="100" cy="100" r="100" />
          </clipPath>
        </defs>
        <g clipPath="url(#avatar)">
          <rect width="200" height="200" fill="#e4e4e4" />
          <circle cx="100" cy="81" r="45" fill="#fff" />
          <ellipse cx="100" cy="192" rx="73" ry="76" fill="#fff" />
          <rect y="172" width="200" height="28" fill="#fff" />
        </g>
      </svg>
      <div className="mt-[1px] leading-[45px]">Ricardo Mochila</div>
      <div className="mt-[14px] flex flex-wrap gap-[12px] text-[27.5px] text-[#1f2328]">
        {["i", "1", "2", "3", "4", "5", "6", "7", "8", "9"].map((label) => (
          <div
            key={label}
            className={`h-[80px] w-[60px] overflow-hidden rounded-[6px] text-center ${label === "2" ? "border-[6px] border-[#1f2328] leading-[30px]" : "border-2 border-[#1f2328] leading-[38px]"}`}
          >
            {label}
            {label === "i" && <div className="h-[40px] bg-[#868e96]" />}
          </div>
        ))}
      </div>
      <div className="mt-[28px] leading-[45px] tracking-[0.007em] text-[#1177d1]">Finish attempt ...</div>
      <div className="mt-[30px] leading-[45px] tracking-[0.008em]">
        Time left <b className="tracking-[0.022em]">1:42:05</b>
      </div>
    </section>
  );
}

function Page() {
  return (
    <main className="flex flex-1 flex-col overflow-hidden rounded-b-[10px] bg-white text-[29px] text-[#373a3c]">
      <div className="h-[77px] pt-[1px] pl-[32px] leading-[77px] tracking-[0.006em] shadow-[0_4px_8px_rgba(0,0,0,0.08)]">MoodleUE 1920</div>
      <h1 className="mt-[57px] pl-[28px] text-[74px] leading-[90px] font-[350] tracking-[-0.0405em]">Linguagens Formais e Autómatos</h1>
      <div className="mt-[46px] flex gap-[30px] pl-[30px]">
        <section className="h-[1140px] w-[2466px] border-2 border-[#dfdfdf] pt-[42px] pr-[40px] pl-[40px]">
          <div className="flex justify-between">
            <QuestionInfo />
            <Formulation />
          </div>
          <div className="mt-[99px] flex justify-between leading-[70px]">
            <div className="h-[73px] w-[247px] border-2 border-[#cccfd8] bg-[#ced4da] text-center text-[#1d2125]">Previous page</div>
            <div className="h-[73px] w-[192px] border-2 border-[#0b5aa0] bg-[#0f64b0] text-center text-white">Next page</div>
          </div>
        </section>
        <QuizNavigation />
      </div>
      <footer className="mt-auto h-[64px] bg-[#373a3c]" />
    </main>
  );
}

export default function App() {
  return (
    <div className="flex h-[2100px] w-[3360px] flex-col overflow-hidden bg-[#2b333b] font-['Inter',sans-serif]">
      <MenuBar />
      <div className="relative flex flex-1">
        <div className="relative z-10 w-[84px] shrink-0">
          <Wallpaper />
          <Dock />
        </div>
        <div className="mt-[2px] flex flex-1 flex-col">
          <TitleBar />
          <UrlBar />
          <Page />
        </div>
      </div>
    </div>
  );
}
